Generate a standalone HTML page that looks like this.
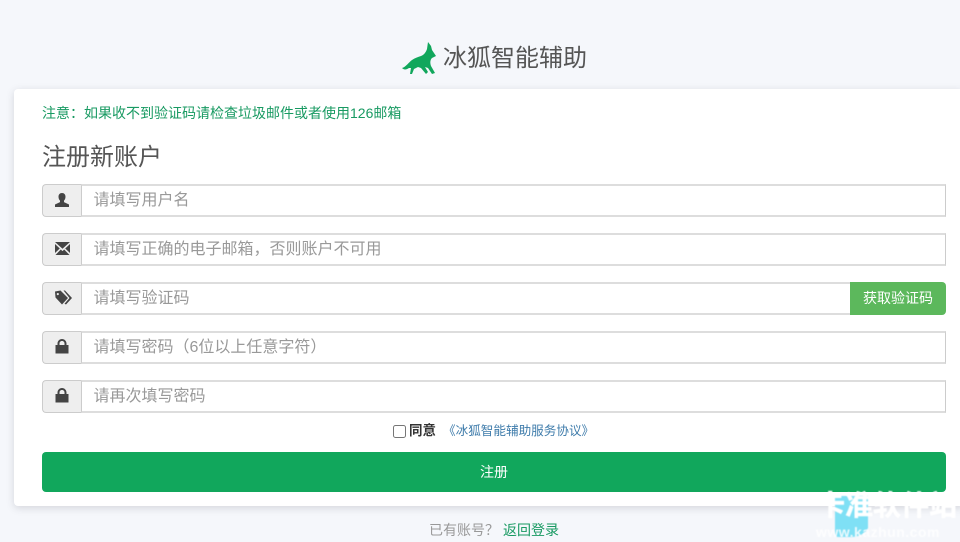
<!DOCTYPE html>
<html lang="zh">
<head>
<meta charset="utf-8">
<style>
*{box-sizing:border-box}
html,body{margin:0;padding:0}
body{width:960px;height:542px;overflow:hidden;background:#f5f7fb;position:relative;font-family:"Liberation Sans","Noto Sans CJK SC",sans-serif;color:#555}
.a{position:absolute;white-space:nowrap}
#card{position:absolute;left:14px;top:89px;width:950px;height:417px;background:#fff;border-radius:4px;box-shadow:0 2px 8px rgba(60,60,80,.18)}
.addon{position:absolute;left:42px;width:40px;height:33px;background:#eee;border:1px solid #ccc;border-right:1px solid #ddd;border-radius:4px 0 0 4px}
.addon svg{position:absolute;left:11px;top:7px}
.input{position:absolute;left:81px;width:865px;height:33px;background:#fff;border:1px solid #ccc;border-top:2px solid #ddd;border-bottom:2px solid #ddd;font-size:16px;line-height:30px;padding-left:11.500px;color:#999}
</style>
</head>
<body>
<svg class="a" style="left:401px;top:41px" width="38" height="35" viewBox="0 0 38 35"><path fill="#11a75c" d="M1 27 C5 26 8 21 11 19 C14 17 17 16 20 15 C23 14 25 11 26 8 L27 1 L30 5 L31 9 L35 15 L31 17 C29 19 29 22 30 25 L34 32 L31 33 L27 27 L24 26 L27 31 L25 33 L20 27 L17 26 L13 28 L11 33 L9 33 L10 27 L8 27 C5 29 3 29 1 27 Z"/></svg>
<div class="a" style="left:443px;top:42px;font-size:24px;line-height:34px;color:#555">冰狐智能辅助</div>

<div id="card"></div>
<div class="a" style="left:42px;top:104px;font-size:14px;line-height:18px;color:#189a62">注意：如果收不到验证码请检查垃圾邮件或者使用126邮箱</div>
<div class="a" style="left:42px;top:141px;font-size:24px;line-height:34px;color:#555">注册新账户</div>

<div class="addon" style="top:184px"><svg width="18" height="18" viewBox="0 0 18 18"><path fill="#444" d="M8 1c2.300 0 3.500 1.600 3.500 3.800 0 1.600-.6 3-1.500 3.800v1.500l5 2.400V15H1v-2.500l5-2.400V8.600C5.100 7.800 4.500 6.400 4.500 4.800 4.500 2.600 5.700 1 8 1z"/></svg></div>
<div class="input" style="top:184px">请填写用户名</div>

<div class="addon" style="top:233px"><svg width="18" height="18" viewBox="0 0 18 18"><path fill="#444" d="M1 1h15L8.500 7.800zM1 3l4.800 4.500L1 12zM16 3v9l-4.800-4.500zM1.500 14l5.300-5.500 1.700 1.600 1.700-1.600 5.300 5.500z"/></svg></div>
<div class="input" style="top:233px">请填写正确的电子邮箱，否则账户不可用</div>

<div class="addon" style="top:282px"><svg width="20" height="18" viewBox="0 0 20 18"><path fill="#444" d="M1 1.500L6.500.5l7.500 7.500-6 6.500L1.500 7.500zM3.800 3a1.100 1.100 0 1 0 .01 0zM9.500.5h1.500l7 7.500-6 6.500-1.500-.8L15.500 8z"/></svg></div>
<div class="input" style="top:282px;width:770px">请填写验证码</div>
<div class="a" style="left:850px;top:282px;width:96px;height:33px;background:#5cb85c;border-radius:0 4px 4px 0;color:#fff;font-size:14px;line-height:33px;text-align:center">获取验证码</div>

<div class="addon" style="top:331px"><svg width="18" height="18" viewBox="0 0 18 18"><path fill="#444" d="M1.500 6H3.500V4.500C3.500 2 5.500 0 8 0s4.500 2 4.500 4.500V6h2v8.500h-13zM5.500 6h5V4.500C10.500 3 9.400 2 8 2S5.500 3 5.500 4.500z"/></svg></div>
<div class="input" style="top:331px">请填写密码（6位以上任意字符）</div>

<div class="addon" style="top:380px"><svg width="18" height="18" viewBox="0 0 18 18"><path fill="#444" d="M1.500 6H3.500V4.500C3.500 2 5.500 0 8 0s4.500 2 4.500 4.500V6h2v8.500h-13zM5.500 6h5V4.500C10.500 3 9.400 2 8 2S5.500 3 5.500 4.500z"/></svg></div>
<div class="input" style="top:380px">请再次填写密码</div>

<div class="a" style="left:393px;top:425px;width:13px;height:13px;border:1px solid #767676;border-radius:2.500px;background:#fff"></div>
<div class="a" style="left:409px;top:422px;font-size:13.500px;line-height:18px;color:#333;font-weight:700">同意</div>
<div class="a" style="left:443px;top:422px;font-size:12.600px;line-height:18px;color:#3f7cab">《冰狐智能辅助服务协议》</div>

<div class="a" style="left:42px;top:452px;width:904px;height:40px;background:#11a75c;border-radius:4px;color:#fff;font-size:14px;line-height:40px;text-align:center">注册</div>

<div class="a" style="left:429px;top:521px;font-size:14px;line-height:18px;color:#999">已有账号？</div>
<div class="a" style="left:503px;top:521px;font-size:14px;line-height:18px;color:#189a62">返回登录</div>

<svg class="a" style="left:835px;top:496px;filter:blur(.6px)" width="33" height="42" viewBox="0 0 33 42"><path fill="#7fe0f5" d="M0 0h33v32c-3 6-10 9-17 9H3C1 41 0 39 0 37z"/></svg>
<div class="a" style="left:817px;top:487px;font-size:28px;line-height:38px;font-weight:700;color:#fff;-webkit-text-stroke:.5px #fff;filter:blur(.5px);width:143px;overflow:hidden">卡准软件站</div>
<div class="a" style="left:816px;top:524px;font-size:14px;line-height:16px;font-weight:700;color:#fff;letter-spacing:.5px;opacity:.85;filter:blur(.4px)">www.kazhun.com</div>
</body>
</html>
